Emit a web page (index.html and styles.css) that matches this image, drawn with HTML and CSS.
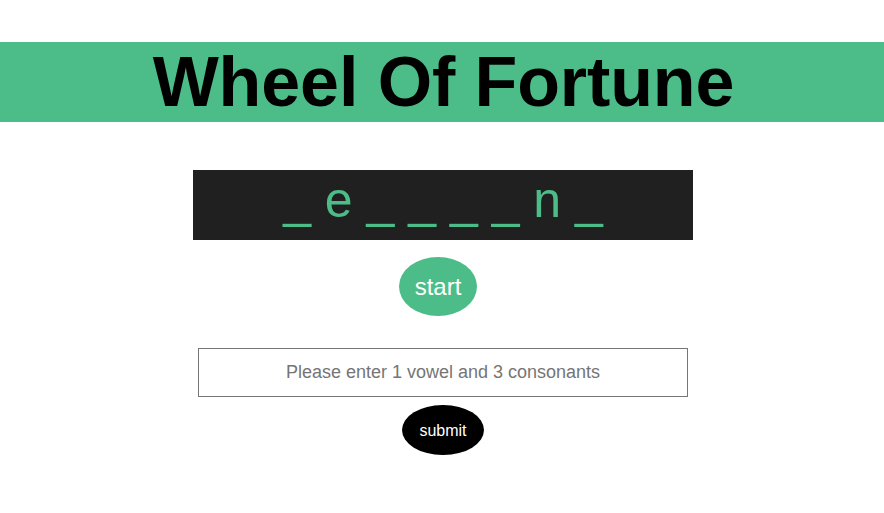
FILE: index.html
```html
<!DOCTYPE html>
<html lang="en">
<head>
<meta charset="utf-8">
<title>Wheel Of Fortune</title>
<link rel="stylesheet" href="styles.css">
</head>
<body>
  <header class="banner">
    <h1 class="title">Wheel Of Fortune</h1>
  </header>
  <main class="game">
    <div class="board">_ e _ _ _ _ n _</div>
    <div class="row">
      <button class="btn btn-start" type="button">start</button>
    </div>
    <input class="guess" type="text" placeholder="Please enter 1 vowel and 3 consonants">
    <div class="row">
      <button class="btn btn-submit" type="button">submit</button>
    </div>
  </main>
</body>
</html>
```

FILE: styles.css
```css
* { box-sizing: border-box; }

html, body {
  margin: 0;
  padding: 0;
  background: #ffffff;
  font-family: "Liberation Sans", Arial, Helvetica, sans-serif;
}

.banner {
  margin-top: 42px;
  height: 80px;
  background: #4cbd88;
}

.title {
  margin: 0;
  padding-left: 3px;
  text-align: center;
  font-size: 70px;
  line-height: 80px;
  font-weight: 700;
  letter-spacing: -0.1px;
  color: #000000;
}

.game {
  display: flex;
  flex-direction: column;
  align-items: center;
  padding-top: 48px;
  padding-left: 2px;
}

.board {
  width: 500px;
  height: 70px;
  padding-top: 2px;
  background: #1f201f;
  color: #4cbd88;
  font-size: 50px;
  line-height: 57px;
  text-align: center;
  white-space: pre;
}

.row {
  display: flex;
  justify-content: center;
  width: 100%;
}

.btn {
  border: none;
  border-radius: 50%;
  font-family: "Liberation Sans", Arial, Helvetica, sans-serif;
  color: #ffffff;
  cursor: pointer;
}

.btn-start {
  margin-top: 17px;
  margin-right: 10px;
  padding: 16px 16px;
  background: #4cbd88;
  font-size: 24px;
  line-height: 27px;
}

.guess {
  margin-top: 32px;
  width: 490px;
  height: 49px;
  border: 1px solid #767676;
  border-radius: 0;
  text-align: center;
  font-family: "Liberation Sans", Arial, Helvetica, sans-serif;
  font-size: 18px;
  color: #333333;
  outline: none;
}

.guess::placeholder {
  color: #757575;
  opacity: 1;
}

.btn-submit {
  margin-top: 8px;
  padding: 17px 17px 15px;
  background: #000000;
  font-size: 16px;
  line-height: 18px;
}
```
